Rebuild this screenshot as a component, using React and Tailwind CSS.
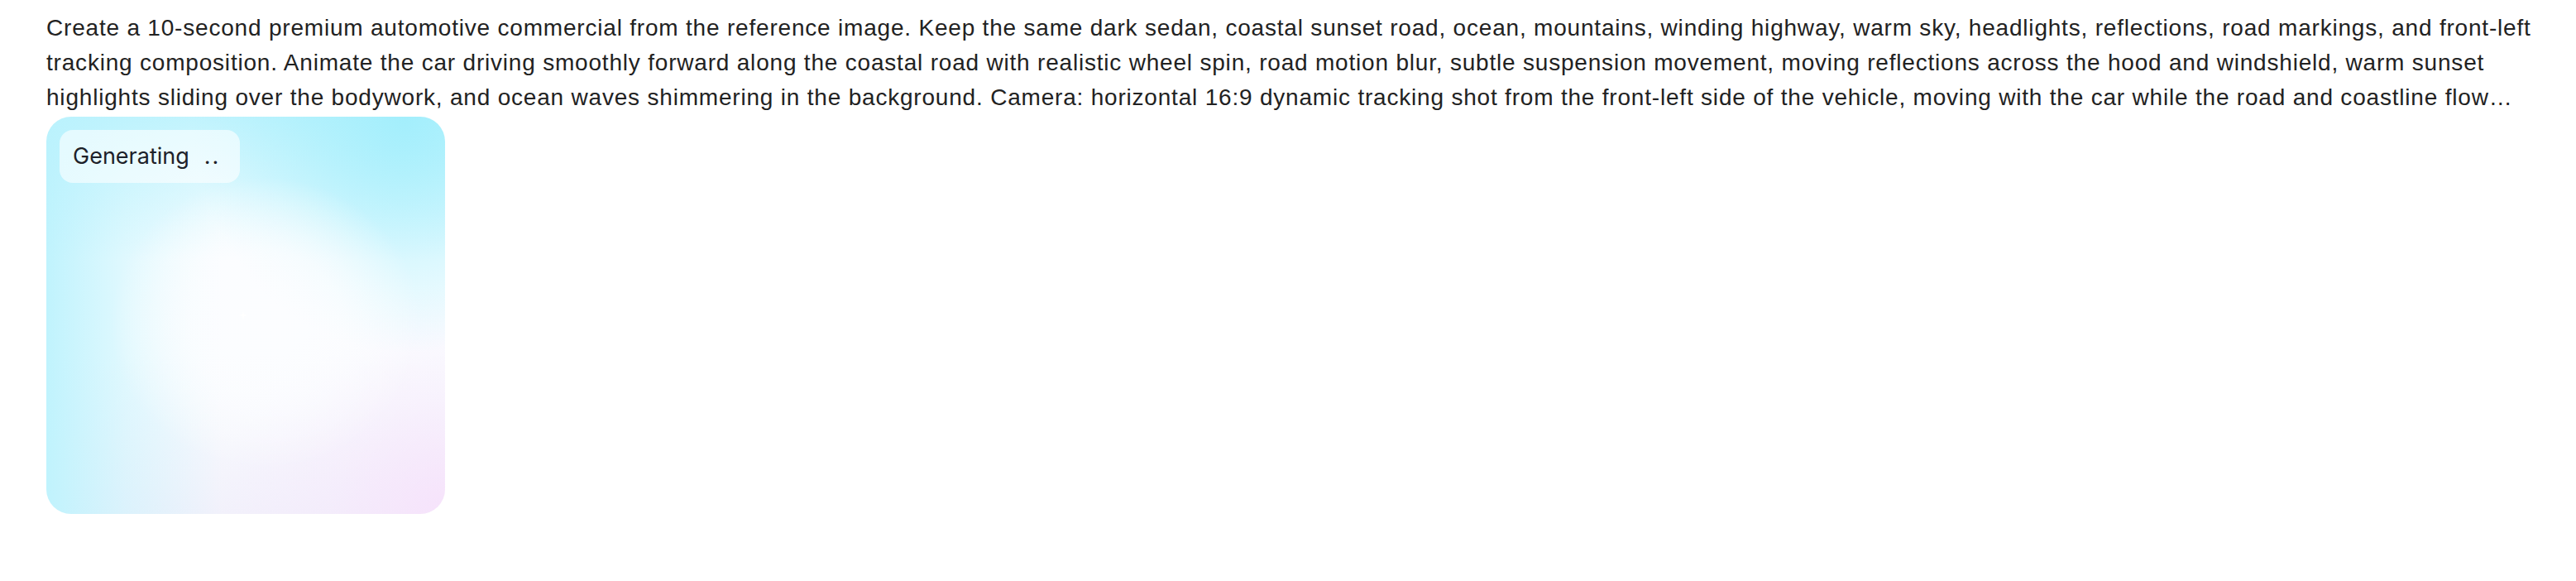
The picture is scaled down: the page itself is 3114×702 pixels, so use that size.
import React from "react";

const PROMPT =
  "Create a 10-second premium automotive commercial from the reference image. Keep the same dark sedan, coastal sunset road, ocean, mountains, winding highway, warm sky, headlights, reflections, road markings, and front-left tracking composition. Animate the car driving smoothly forward along the coastal road with realistic wheel spin, road motion blur, subtle suspension movement, moving reflections across the hood and windshield, warm sunset highlights sliding over the bodywork, and ocean waves shimmering in the background. Camera: horizontal 16:9 dynamic tracking shot from the front-left side of the vehicle, moving with the car while the road and coastline flow smoothly past, cinematic lighting, premium commercial look.";

export default function App() {
  return (
    <div className="min-h-screen bg-white px-[56px] pt-[13px] font-['Liberation_Sans',Arial,sans-serif]">
      {/* Prompt */}
      <p className="w-[3036px] text-[28px] leading-[42px] tracking-[0.8px] text-[#222222] line-clamp-3">
        {PROMPT}
      </p>

      {/* Generating card */}
      <div className="relative mt-[2px] w-[482px] h-[480px] rounded-[30px] overflow-hidden bg-[radial-gradient(ellipse_at_55%_52%,rgba(252,253,255,0.95)_0%,rgba(252,253,255,0.7)_25%,rgba(252,253,255,0)_50%),radial-gradient(ellipse_at_90%_0%,rgba(160,238,252,0.9)_0%,rgba(160,238,252,0)_42%),linear-gradient(180deg,rgba(185,242,253,0.85)_0%,rgba(185,242,253,0)_36%),linear-gradient(90deg,rgba(192,243,253,1)_0%,rgba(192,243,253,0.45)_20%,rgba(192,243,253,0)_44%),radial-gradient(circle_at_100%_100%,rgba(247,224,251,0.85)_0%,rgba(247,224,251,0.3)_20%,rgba(247,224,251,0)_40%),linear-gradient(180deg,#fafdff_0%,#fafdff_60%,#f2f1fb_100%)]">
        <div className="absolute left-[16px] top-[16px] h-[64px] pl-[16px] pr-[24px] flex items-center gap-[18px] rounded-[16px] bg-white/60 font-['Inter',sans-serif] text-[27px] text-[#1d2129]">
          <span>Generating</span>
          <span className="tracking-[2px]">..</span>
        </div>
        <svg
          className="absolute left-[232px] top-[234px] w-[12px] h-[12px] text-white"
          viewBox="0 0 16 16"
          fill="currentColor"
        >
          <path d="M8 0 L9.2 6.8 L16 8 L9.2 9.2 L8 16 L6.8 9.2 L0 8 L6.8 6.8 Z" />
        </svg>
      </div>
    </div>
  );
}
